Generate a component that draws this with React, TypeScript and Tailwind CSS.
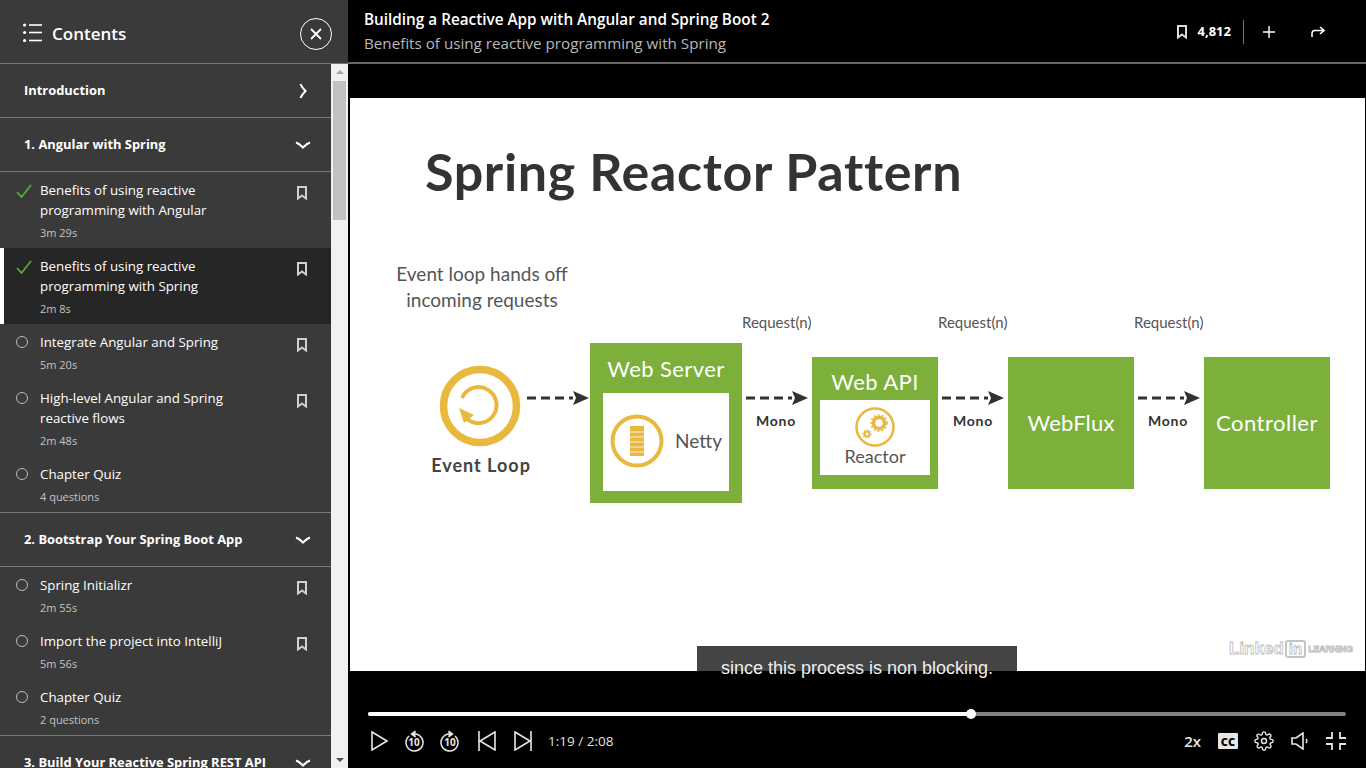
import React from 'react';

type Lesson = { title: string[]; meta: string; state: 'done' | 'open'; active?: boolean; quiz?: boolean };

const chapterOne: Lesson[] = [
  { title: ['Benefits of using reactive', 'programming with Angular'], meta: '3m 29s', state: 'done' },
  { title: ['Benefits of using reactive', 'programming with Spring'], meta: '2m 8s', state: 'done', active: true },
  { title: ['Integrate Angular and Spring'], meta: '5m 20s', state: 'open' },
  { title: ['High-level Angular and Spring', 'reactive flows'], meta: '2m 48s', state: 'open' },
  { title: ['Chapter Quiz'], meta: '4 questions', state: 'open', quiz: true },
];

const chapterTwo: Lesson[] = [
  { title: ['Spring Initializr'], meta: '2m 55s', state: 'open' },
  { title: ['Import the project into IntelliJ'], meta: '5m 56s', state: 'open' },
  { title: ['Chapter Quiz'], meta: '2 questions', state: 'open', quiz: true },
];

const BookmarkIcon = ({ className }: { className?: string }) => (
  <svg className={className} viewBox="0 0 12 14" width="12" height="14" fill="none" stroke="currentColor" strokeWidth="2">
    <path d="M2 1h8v11.5L6 9.5l-4 3z" />
  </svg>
);

const Chevron = ({ open }: { open: boolean }) =>
  open ? (
    <svg viewBox="0 0 16 8" width="16" height="8" fill="none" stroke="white" strokeWidth="2">
      <path d="M1 1.5c3 1 5 3 7 5 2-2 4-4 7-5" />
    </svg>
  ) : (
    <svg viewBox="0 0 8 16" width="8" height="16" fill="none" stroke="white" strokeWidth="2">
      <path d="M1.5 1c1 3 3 5 5 7-2 2-4 4-5 7" />
    </svg>
  );

const SectionRow = ({ title, open, last }: { title: string; open: boolean; last?: boolean }) => (
  <div className={`flex h-[54px] items-center justify-between pl-6 pr-[20px] ${last ? '' : 'border-b border-[#777777]'}`}>
    <span className="text-[12.9px] font-bold text-white">{title}</span>
    <span className="flex w-4 justify-center">
      <Chevron open={open} />
    </span>
  </div>
);

const LessonRow = ({ lesson }: { lesson: Lesson }) => (
  <div className={`relative flex pt-2 ${lesson.active ? 'bg-[#262626]' : ''}`}>
    {lesson.active && <div className="absolute left-0 top-0 h-full w-1 bg-white" />}
    <div className="flex w-10 shrink-0 justify-center pl-1 pr-[2px] pt-[4px]">
      {lesson.state === 'done' ? (
        <svg viewBox="0 0 16 14" width="16" height="14" fill="none" stroke="#5aa83c" strokeWidth="1.8" className="ml-[5px]">
          <path d="M1 8l4.5 5L15 1" />
        </svg>
      ) : (
        <span className="ml-[1px] h-[12px] w-[12px] rounded-full border border-[#bbbbbb]" />
      )}
    </div>
    <div className="min-w-0 flex-1">
      {lesson.title.map((line) => (
        <div key={line} className="text-[13.3px] leading-5 text-white">
          {line}
        </div>
      ))}
      <div className="pb-[5px] pt-[3px] text-[11px] leading-5 text-[#c4c4c4]">{lesson.meta}</div>
    </div>
    {!lesson.quiz && (
      <div className="w-[60px] shrink-0 pl-[25px] pt-[6px] text-[#d0d0d0]">
        <BookmarkIcon />
      </div>
    )}
  </div>
);

const Sidebar = () => (
  <aside className="flex h-full w-[348px] shrink-0 flex-col bg-[#3a3a3a]">
    <div className="flex h-16 shrink-0 items-center justify-between border-b border-[#777777] pl-[23px] pr-[16px]">
      <div className="flex items-center gap-[10px]">
        <svg viewBox="0 0 19 20" width="19" height="20" fill="white" className="mt-[2px]">
          <circle cx="1.6" cy="2" r="1.6" />
          <circle cx="1.6" cy="9.5" r="1.6" />
          <circle cx="1.6" cy="17.5" r="1.6" />
          <rect x="6" y="1.2" width="13" height="1.6" />
          <rect x="6" y="8.7" width="13" height="1.6" />
          <rect x="6" y="16.7" width="13" height="1.6" />
        </svg>
        <span className="mt-[4px] text-[17px] font-semibold leading-none text-white">Contents</span>
      </div>
      <button className="mt-[5px] flex h-8 w-8 items-center justify-center rounded-full border border-white">
        <svg viewBox="0 0 12 12" width="12" height="12" stroke="white" strokeWidth="1.8">
          <path d="M1 1l10 10M11 1L1 11" />
        </svg>
      </button>
    </div>
    <div className="flex min-h-0 flex-1">
      <div className="w-[331px] shrink-0 overflow-hidden">
        <SectionRow title="Introduction" open={false} />
        <SectionRow title="1. Angular with Spring" open />
        {chapterOne.map((l) => (
          <LessonRow key={l.title[0] + l.meta} lesson={l} />
        ))}
        <div className="border-t border-[#777777]" />
        <SectionRow title="2. Bootstrap Your Spring Boot App" open />
        {chapterTwo.map((l) => (
          <LessonRow key={l.title[0] + l.meta} lesson={l} />
        ))}
        <div className="border-t border-[#777777]" />
        <SectionRow title="3. Build Your Reactive Spring REST API" open last />
      </div>
      <div className="flex w-[17px] flex-col items-center justify-between bg-[#f1f1f1] py-[6px]">
        <div className="w-full">
          <div className="mx-auto h-0 w-0 border-x-[4px] border-b-[4px] border-x-transparent border-b-[#a3a3a3]" />
          <div className="mx-auto mt-[7px] h-[139px] w-[13px] bg-[#c1c1c1]" />
        </div>
        <div className="h-0 w-0 border-x-[4px] border-t-[4px] border-x-transparent border-t-[#505050]" />
      </div>
    </div>
  </aside>
);

const TopBar = () => (
  <header className="flex h-16 shrink-0 items-center justify-between border-b-2 border-[#666666] bg-black pl-4 pr-[41px] pt-[1px]">
    <div className="-mt-[1px]">
      <div className="text-[15.3px] font-semibold leading-[24px] text-white">Building a Reactive App with Angular and Spring Boot 2</div>
      <div className="text-[15.2px] leading-[24px] text-[#b8b8b8]">Benefits of using reactive programming with Spring</div>
    </div>
    <div className="flex items-center text-white">
      <BookmarkIcon className="text-[#dddddd]" />
      <span className="ml-[10px] text-[13px] font-bold">4,812</span>
      <span className="ml-[12px] h-[24px] w-px bg-[#777777]" />
      <svg viewBox="0 0 12 12" width="12" height="12" stroke="white" strokeWidth="1.4" className="ml-[19px]">
        <path d="M6 0v12M0 6h12" />
      </svg>
      <svg viewBox="0 0 14 12" width="14" height="12" fill="none" stroke="white" strokeWidth="1.6" className="ml-[36px]">
        <path d="M1 11V7.5C1 5.5 2.5 4.5 4 4.5h9M9 1l4 3.5L9 8" />
      </svg>
    </div>
  </header>
);

const slideFont = "font-['Lato',sans-serif]";

const DashArrow = ({ x }: { x: number }) => (
  <svg className="absolute top-[292px]" style={{ left: x }} viewBox="0 0 62 16" width="62" height="16">
    <path d="M0 8h46" stroke="#2f3333" strokeWidth="3" strokeDasharray="9 5" fill="none" />
    <path d="M46 1l16 7-16 7 3-7z" fill="#2f3333" />
  </svg>
);

const MonoLabel = ({ center }: { center: number }) => (
  <div className="absolute top-[312px] w-20 text-center text-[14px] font-bold tracking-[0.7px] text-[#333333]" style={{ left: center - 40 }}>
    Mono
  </div>
);

const RequestLabel = ({ x }: { x: number }) => (
  <div className="absolute top-[213px] text-[15px] text-[#555555]" style={{ left: x }}>
    Request(n)
  </div>
);

// coordinates in here are the slide's own, it is a drawing more than a layout
const Slide = () => (
  <div className={`relative h-[573px] bg-white ${slideFont}`}>
    <div className="absolute left-[75px] top-[40px] whitespace-nowrap text-[52px] font-bold leading-[66px] tracking-[0.65px] text-[#333333]">Spring Reactor Pattern</div>
    <div className="absolute left-[32px] top-[163px] w-[200px] text-center text-[19px] leading-[26px] text-[#555555]">
      Event loop hands off
      <br />
      incoming requests
    </div>
    <RequestLabel x={392} />
    <RequestLabel x={588} />
    <RequestLabel x={784} />

    <svg className="absolute left-[88px] top-[266px]" viewBox="0 0 84 84" width="84" height="84" fill="none">
      <circle cx="42" cy="42" r="36.5" stroke="#e8b83f" strokeWidth="7.5" />
      <path d="M24 34A18 18 0 1 1 27 53" stroke="#e8b83f" strokeWidth="4" />
      <path d="M21 44l15 7-10 8z" fill="#e8b83f" />
    </svg>
    <div className="absolute left-[71px] top-[354px] w-[120px] text-center text-[18px] font-bold tracking-[1px] text-[#444444]">Event Loop</div>
    <DashArrow x={177} />

    <div className="absolute left-[240px] top-[245px] h-[160px] w-[152px] bg-[#7cb03b]">
      <div className="pt-[10px] text-center text-[22px] leading-[32px] tracking-[0.4px] text-white">Web Server</div>
      <div className="absolute left-[13px] top-[50px] h-[98px] w-[126px] bg-white">
        <svg className="absolute left-[7px] top-[21px]" viewBox="0 0 54 54" width="54" height="54" fill="none">
          <circle cx="27" cy="27" r="24.5" stroke="#e8b83f" strokeWidth="4" />
          <rect x="20" y="12" width="14" height="30" fill="#e8b83f" />
          <path d="M20 18h14M20 23h14M20 28h14M20 33h14M20 38h14" stroke="#fff" strokeWidth="0.8" />
        </svg>
        <div className="absolute left-[72px] top-[35px] text-[19px] leading-[26px] text-[#555555]">Netty</div>
      </div>
    </div>
    <DashArrow x={396} />
    <MonoLabel center={426} />

    <div className="absolute left-[462px] top-[259px] h-[132px] w-[126px] bg-[#7cb03b]">
      <div className="pt-[10px] text-center text-[22px] leading-[30px] tracking-[0.4px] text-white">Web API</div>
      <div className="absolute left-[8px] top-[43px] h-[75px] w-[110px] bg-white">
        <svg className="absolute left-[34px] top-[6px]" viewBox="0 0 42 42" width="42" height="42" fill="none">
          <circle cx="21" cy="21" r="18.5" stroke="#e8b83f" strokeWidth="2.5" />
          <circle cx="25" cy="17" r="5.5" stroke="#e8b83f" strokeWidth="3.5" />
          <circle cx="25" cy="17" r="8" stroke="#e8b83f" strokeWidth="1.6" strokeDasharray="2 2" />
          <circle cx="13" cy="28" r="2.5" stroke="#e8b83f" strokeWidth="2" />
          <circle cx="13" cy="28" r="4" stroke="#e8b83f" strokeWidth="1.2" strokeDasharray="1.5 1.5" />
        </svg>
        <div className="absolute inset-x-0 top-[44px] text-center text-[18px] leading-[24px] text-[#555555]">Reactor</div>
      </div>
    </div>
    <DashArrow x={592} />
    <MonoLabel center={623} />

    <div className="absolute left-[658px] top-[259px] flex h-[132px] w-[126px] items-center justify-center bg-[#7cb03b] pb-[2px] text-[22px] tracking-[0.2px] text-white">WebFlux</div>
    <DashArrow x={788} />
    <MonoLabel center={818} />
    <div className="absolute left-[854px] top-[259px] flex h-[132px] w-[126px] items-center justify-center bg-[#7cb03b] pb-[2px] text-[22px] tracking-[0.5px] text-white">Controller</div>

    <div className="absolute left-[879px] top-[542px] flex items-center font-['Liberation_Sans',sans-serif] font-bold text-white [-webkit-text-stroke:0.8px_#bdbdbd]">
      <span className="text-[17px] leading-[18px]">Linked</span>
      <span className="ml-[1px] rounded-[3px] border-2 border-[#c4c4c4] px-[2px] text-[15px] leading-[14px]">in</span>
      <span className="ml-[2px] text-[9px] leading-[10px] tracking-[-0.3px]">LEARNING</span>
    </div>
  </div>
);

const PlayerControls = () => (
  <div className="flex flex-1 flex-col px-5">
    <div className="relative mt-[41px] h-1 rounded-full bg-[#808080]">
      <div className="h-full w-[603px] rounded-full bg-white" />
      <div className="absolute left-[598px] top-[-3px] h-[10px] w-[10px] rounded-full bg-white" />
    </div>
    <div className="mt-[12px] flex h-[26px] items-center text-[#e6e6e6]">
      <svg viewBox="0 0 18 20" width="18" height="20" fill="none" stroke="currentColor" strokeWidth="1.6" className="ml-[3px]">
        <path d="M1 1l15 9-15 9z" />
      </svg>
      <svg viewBox="0 0 20 22" width="20" height="22" fill="none" stroke="currentColor" strokeWidth="1.5" className="ml-[15px]">
        <path d="M5 6a8.5 8.5 0 1 0 6-2" />
        <path d="M11.5 1L7.5 4l4 3" fill="currentColor" />
        <text x="10" y="15.5" textAnchor="middle" fontSize="10" fontWeight="700" fill="currentColor" stroke="none" fontFamily="Open Sans">10</text>
      </svg>
      <svg viewBox="0 0 20 22" width="20" height="22" fill="none" stroke="currentColor" strokeWidth="1.5" className="ml-[16px]">
        <path d="M15 6a8.5 8.5 0 1 1-6-2" />
        <path d="M8.5 1l4 3-4 3" fill="currentColor" />
        <text x="10" y="15.5" textAnchor="middle" fontSize="10" fontWeight="700" fill="currentColor" stroke="none" fontFamily="Open Sans">10</text>
      </svg>
      <svg viewBox="0 0 18 20" width="18" height="20" fill="none" stroke="currentColor" strokeWidth="1.6" className="ml-[18px]">
        <path d="M1 0v20M17 1L2 10l15 9z" />
      </svg>
      <svg viewBox="0 0 18 20" width="18" height="20" fill="none" stroke="currentColor" strokeWidth="1.6" className="ml-[18px]">
        <path d="M17 0v20M1 1l15 9-15 9z" />
      </svg>
      <span className="ml-[16px] text-[13.5px] text-[#e0e0e0]">1:19 / 2:08</span>
      <span className="ml-auto text-[15px] font-semibold text-[#e6e6e6]">2x</span>
      <span className="ml-[17px] flex h-[16px] w-[20px] items-center justify-center rounded-[1px] bg-[#e6e6e6] text-[11px] font-extrabold leading-none text-black">CC</span>
      <svg viewBox="0 0 24 24" width="20" height="20" fill="none" stroke="currentColor" strokeWidth="1.7" strokeLinejoin="round" className="ml-[16px]">
        <circle cx="12" cy="12" r="3" />
        <path d="M19.4 15a1.65 1.65 0 0 0 .33 1.82l.06.06a2 2 0 1 1-2.83 2.83l-.06-.06a1.65 1.65 0 0 0-2.82 1.17V21a2 2 0 0 1-4 0v-.09a1.65 1.65 0 0 0-2.82-1.17l-.06.06a2 2 0 1 1-2.83-2.83l.06-.06A1.65 1.65 0 0 0 3.09 14H3a2 2 0 0 1 0-4h.09a1.65 1.65 0 0 0 1.17-2.82l-.06-.06a2 2 0 1 1 2.83-2.83l.06.06A1.65 1.65 0 0 0 10 3.09V3a2 2 0 0 1 4 0v.09a1.65 1.65 0 0 0 2.82 1.17l.06-.06a2 2 0 1 1 2.83 2.83l-.06.06A1.65 1.65 0 0 0 20.91 10H21a2 2 0 0 1 0 4h-.09a1.65 1.65 0 0 0-1.51 1z" />
      </svg>
      <svg viewBox="0 0 18 18" width="18" height="18" fill="none" stroke="currentColor" strokeWidth="1.6" className="ml-[17px]">
        <path d="M1 6h4l7-5v16l-7-5H1z" />
        <path d="M15 7c1 1 1 3 0 4" />
      </svg>
      <svg viewBox="0 0 20 18" width="20" height="18" fill="none" stroke="currentColor" strokeWidth="1.8" className="ml-[17px]">
        <path d="M0 6h6V0M14 0v6h6M0 12h6v6M14 18v-6h6" />
      </svg>
    </div>
  </div>
);

export default function App() {
  return (
    <div className="flex h-screen w-[1366px] overflow-hidden bg-black font-['Open_Sans',sans-serif]">
      <Sidebar />
      <main className="flex min-w-0 flex-1 flex-col">
        <TopBar />
        <div className="h-[34px] shrink-0" />
        <div className="relative ml-[2px] mr-[1px]">
          <Slide />
          <div className="absolute left-[347px] top-[548px] flex h-[25px] w-[320px] justify-center bg-[#444444]">
            <span className="mt-[9px] whitespace-nowrap font-['Liberation_Sans',sans-serif] text-[18px] leading-[26px] text-[#eeeeee]">since this process is non blocking.</span>
          </div>
        </div>
        <PlayerControls />
      </main>
    </div>
  );
}
